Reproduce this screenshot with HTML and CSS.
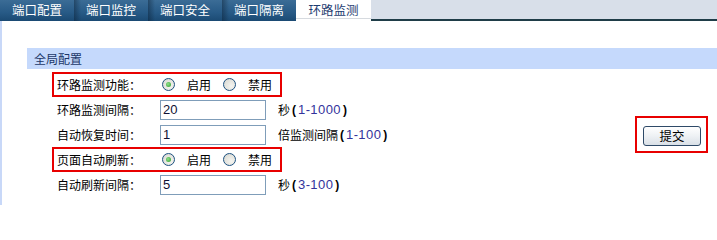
FILE: index.html
```html
<!DOCTYPE html>
<html>
<head>
<meta charset="utf-8">
<link rel="stylesheet" href="styles.css">
</head>
<body>
<div class="tabs">
  <div class="tab">端口配置</div>
  <div class="tab">端口监控</div>
  <div class="tab">端口安全</div>
  <div class="tab">端口隔离</div>
  <div class="tab active">环路监测</div>
  <div class="tabfill"></div>
</div>
<div class="page">
  <div class="section-title">全局配置</div>
  <div class="content">
    <div class="form">
      <div class="row boxed">
        <span class="label">环路监测功能：</span>
        <span class="radio checked"></span><span class="rtext">启用</span>
        <span class="radio"></span><span class="rtext">禁用</span>
      </div>
      <div class="row">
        <span class="label">环路监测间隔：</span>
        <span class="input">20</span>
        <span class="hint">秒<span class="paren">(</span><span class="num">1-1000</span><span class="paren">)</span></span>
      </div>
      <div class="row">
        <span class="label">自动恢复时间：</span>
        <span class="input">1</span>
        <span class="hint">倍监测间隔<span class="paren">(</span><span class="num">1-100</span><span class="paren">)</span></span>
      </div>
      <div class="row boxed">
        <span class="label">页面自动刷新：</span>
        <span class="radio checked"></span><span class="rtext">启用</span>
        <span class="radio"></span><span class="rtext">禁用</span>
      </div>
      <div class="row">
        <span class="label">自动刷新间隔：</span>
        <span class="input">5</span>
        <span class="hint">秒<span class="paren">(</span><span class="num">3-100</span><span class="paren">)</span></span>
      </div>
    </div>
    <div class="submit-box"><button class="submit">提交</button></div>
  </div>
</div>
</body>
</html>
```
FILE: styles.css
```css
html, body {
  margin: 0;
  padding: 0;
  background: #fff;
}
body {
  font-family: "Noto Sans CJK SC", "Liberation Sans", sans-serif;
  font-size: 12px;
  color: #000;
  width: 717px;
  height: 205px;
  overflow: hidden;
}
.tabs {
  display: flex;
  height: 21px;
}
.tab {
  width: 74px;
  height: 21px;
  line-height: 20px;
  text-align: center;
  color: #fff;
  font-size: 12.5px;
  background:
    linear-gradient(to right, rgba(10,30,50,0.45) 0, rgba(10,30,50,0) 7px),
    linear-gradient(#3b6c96, #275a86 60%, #1b4a73);
}
.tab:first-child {
  background: linear-gradient(#3b6c96, #275a86 60%, #1b4a73);
}
.tab.active {
  width: 75px;
  color: #1d3c70;
  background: #fff;
  box-shadow: inset 0 -2px 0 #fff, inset 0 -3px 0 #d6dadf;
}
.tabfill {
  flex: 1;
  height: 19px;
  background: #d8dfe9;
  border-bottom: 2px solid #1f3d48;
}
.page {
  border-left: 2px solid #c8d8f8;
  height: 184px;
  padding-top: 27px;
  padding-left: 25px;
  box-sizing: border-box;
}
.section-title {
  height: 21px;
  line-height: 21px;
  background: #c5d9fc;
  color: #1b3768;
  padding-left: 7px;
}
.content {
  display: flex;
  justify-content: space-between;
  align-items: center;
  padding-top: 3px;
  padding-left: 25px;
  padding-right: 9px;
}
.row {
  display: flex;
  align-items: center;
  height: 25px;
  box-sizing: border-box;
  border: 2px solid transparent;
  padding-left: 3px;
}
.row.boxed {
  border-color: #e80000;
  width: 230px;
}
.label {
  width: 103px;
  flex: none;
}
.radio {
  width: 13px;
  height: 13px;
  box-sizing: border-box;
  border-radius: 50%;
  border: 1px solid #1c5180;
  background: radial-gradient(circle at 65% 65%, #f4f4f0 0, #e2e2dc 60%, #cfcfc8 100%);
  margin-left: 2px;
  margin-right: 12px;
  position: relative;
  flex: none;
}
.radio + .rtext + .radio {
  margin-left: 12px;
}
.radio.checked::after {
  content: "";
  position: absolute;
  left: 3px;
  top: 3px;
  width: 5px;
  height: 5px;
  border-radius: 50%;
  background: radial-gradient(circle at 40% 40%, #8ee08a, #2c9a2c);
}
.input {
  width: 106px;
  height: 20px;
  box-sizing: border-box;
  border: 1px solid #7f9db9;
  font-family: "Liberation Sans", sans-serif;
  font-size: 13px;
  line-height: 18px;
  padding-left: 2px;
  color: #111133;
  flex: none;
}
.hint {
  margin-left: 12px;
  display: flex;
  align-items: center;
}
.paren {
  font-family: "Liberation Sans", sans-serif;
  font-weight: bold;
  font-size: 12px;
  margin: 0 2px;
}
.num {
  font-family: "Liberation Sans", sans-serif;
  font-size: 13px;
  letter-spacing: 0.4px;
  color: #33339c;
}
.submit-box {
  border: 2px solid #e80000;
  padding: 8px 5px 5px 6px;
}
.submit {
  display: block;
  width: 58px;
  height: 20px;
  margin: 0;
  padding: 0;
  border: 1px solid #2e4a68;
  border-radius: 3px;
  background: linear-gradient(#ffffff, #eef1f4 50%, #d9e0e7);
  font-family: "Noto Sans CJK SC", sans-serif;
  font-size: 12.5px;
  color: #000;
  line-height: 18px;
}
```
